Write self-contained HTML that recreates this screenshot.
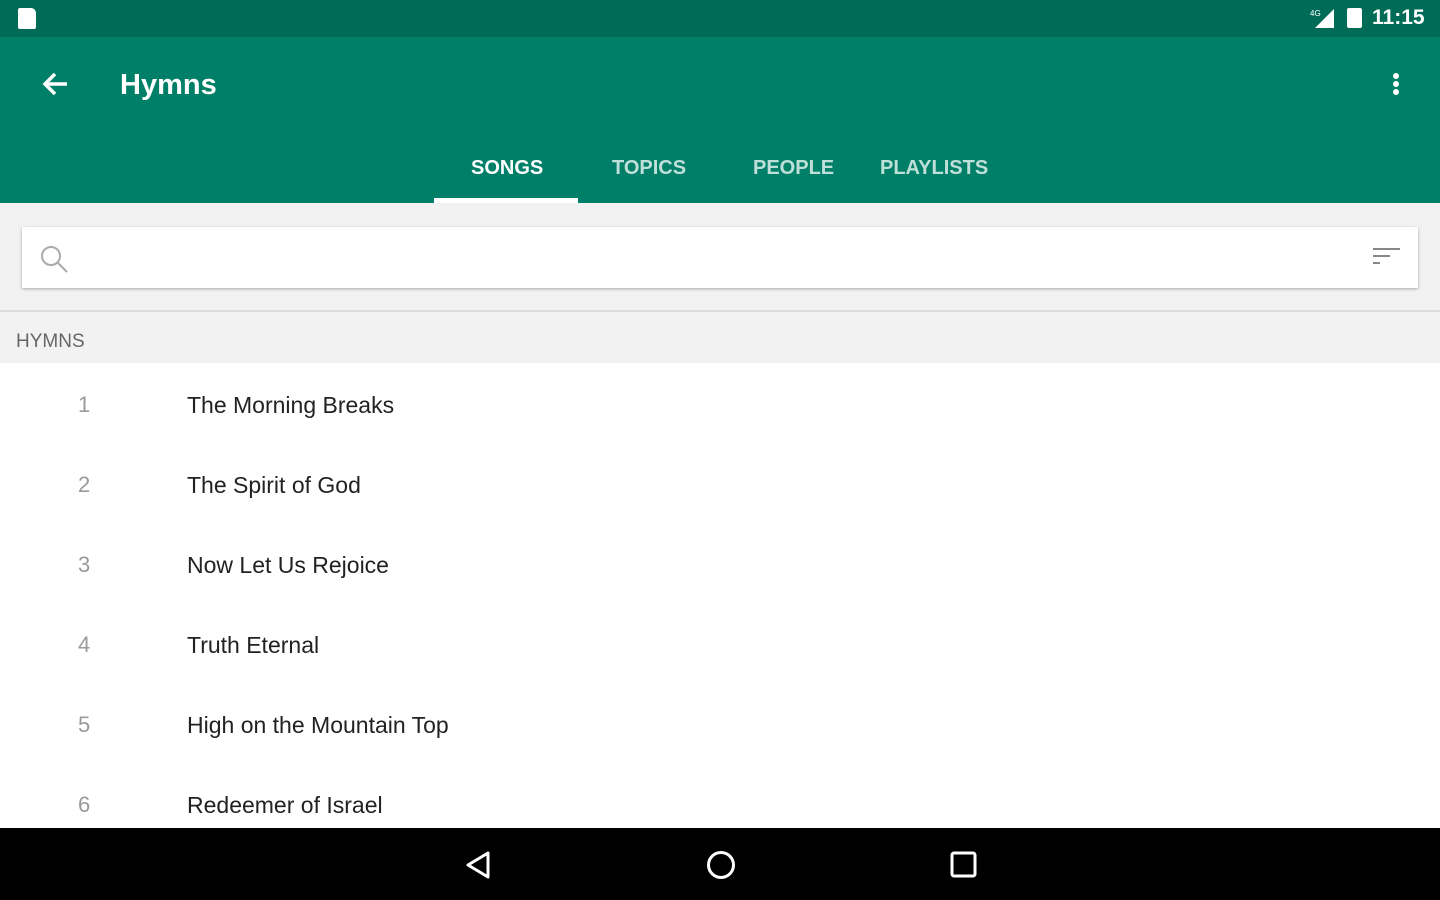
<!DOCTYPE html>
<html><head><style>
body{margin:0;width:1440px;height:900px;overflow:hidden;font-family:"Liberation Sans",sans-serif;background:#fff;position:relative}
.sb{position:absolute;top:0;left:0;width:1440px;height:37px;background:#006c58}
.ab{position:absolute;top:37px;left:0;width:1440px;height:166px;background:#007f68}
.t{position:absolute;color:#fff}
.tab{position:absolute;top:157px;font-size:20px;font-weight:bold;color:rgba(255,255,255,.75)}
.gray{position:absolute;top:203px;left:0;width:1440px;height:160px;background:#f2f2f2}
.search{position:absolute;top:227px;left:22px;width:1396px;height:61px;background:#fff;box-shadow:0 1px 3px rgba(0,0,0,.3)}
.row{position:absolute;left:0;width:1440px;font-size:23px;color:#222}
.row .n{position:absolute;left:78px;color:#9a9a9a;font-size:22px}
.row .s{position:absolute;left:187px}
.nav{position:absolute;top:828px;left:0;width:1440px;height:72px;background:#000}
</style></head><body>
<div class="sb">
<div style="position:absolute;left:18px;top:8px;width:18px;height:21px;background:#fff;border-radius:2px 5px 2px 2px"></div>
<svg style="position:absolute;left:1310px;top:7px" width="26" height="22"><polygon points="24,2 24,21 5,21" fill="#fff"/><text x="0" y="9" font-size="8" fill="#fff" font-family="Liberation Sans">4G</text></svg>
<div style="position:absolute;left:1347px;top:8px;width:15px;height:20px;background:#fff;border-radius:2px"></div>
<div class="t" style="left:1372px;top:6px;font-size:21px;font-weight:bold">11:15</div>
</div>
<div class="ab">
<svg style="position:absolute;left:40px;top:34px" width="30" height="26"><path d="M27 13H5M15 3L5 13l10 10" stroke="#fff" stroke-width="3.5" fill="none"/></svg>
<div class="t" style="left:120px;top:32px;font-size:29px;font-weight:bold">Hymns</div>
<div style="position:absolute;left:1393px;top:36px;width:6px;height:6px;border-radius:3px;background:#fff;box-shadow:0 8px 0 #fff,0 16px 0 #fff"></div>
<div class="tab" style="left:471px;color:#fff;top:120px">SONGS</div>
<div class="tab" style="left:612px;top:120px">TOPICS</div>
<div class="tab" style="left:753px;top:120px">PEOPLE</div>
<div class="tab" style="left:880px;top:120px">PLAYLISTS</div>
<div style="position:absolute;left:434px;top:161px;width:144px;height:5px;background:#fff"></div>
</div>
<div class="gray"></div>
<div class="search">
<svg style="position:absolute;left:16px;top:16px" width="32" height="32"><circle cx="13" cy="13" r="9" stroke="#aaa" stroke-width="2" fill="none"/><path d="M20 20l9 9" stroke="#aaa" stroke-width="2"/></svg>
<svg style="position:absolute;left:1350px;top:20px" width="30" height="20"><path d="M1 2h27M1 9h17M1 16h7" stroke="#888" stroke-width="2"/></svg>
</div>
<div style="position:absolute;top:310px;left:0;width:1440px;height:2px;background:#ddd"></div>
<div style="position:absolute;left:16px;top:331px;font-size:19px;color:#666">HYMNS</div>
<div class="row" style="top:392px"><span class="n">1</span><span class="s">The Morning Breaks</span></div>
<div class="row" style="top:472px"><span class="n">2</span><span class="s">The Spirit of God</span></div>
<div class="row" style="top:552px"><span class="n">3</span><span class="s">Now Let Us Rejoice</span></div>
<div class="row" style="top:632px"><span class="n">4</span><span class="s">Truth Eternal</span></div>
<div class="row" style="top:712px"><span class="n">5</span><span class="s">High on the Mountain Top</span></div>
<div class="row" style="top:792px"><span class="n">6</span><span class="s">Redeemer of Israel</span></div>
<div class="nav">
<svg style="position:absolute;left:464px;top:22px" width="30" height="30"><path d="M24 3L4 15l20 12z" stroke="#fff" stroke-width="3" fill="none" stroke-linejoin="round"/></svg>
<svg style="position:absolute;left:705px;top:21px" width="32" height="32"><circle cx="16" cy="16" r="12.5" stroke="#fff" stroke-width="3" fill="none"/></svg>
<svg style="position:absolute;left:950px;top:23px" width="28" height="28"><rect x="2" y="2" width="23" height="23" rx="2" stroke="#fff" stroke-width="3" fill="none"/></svg>
</div>
</body></html>
